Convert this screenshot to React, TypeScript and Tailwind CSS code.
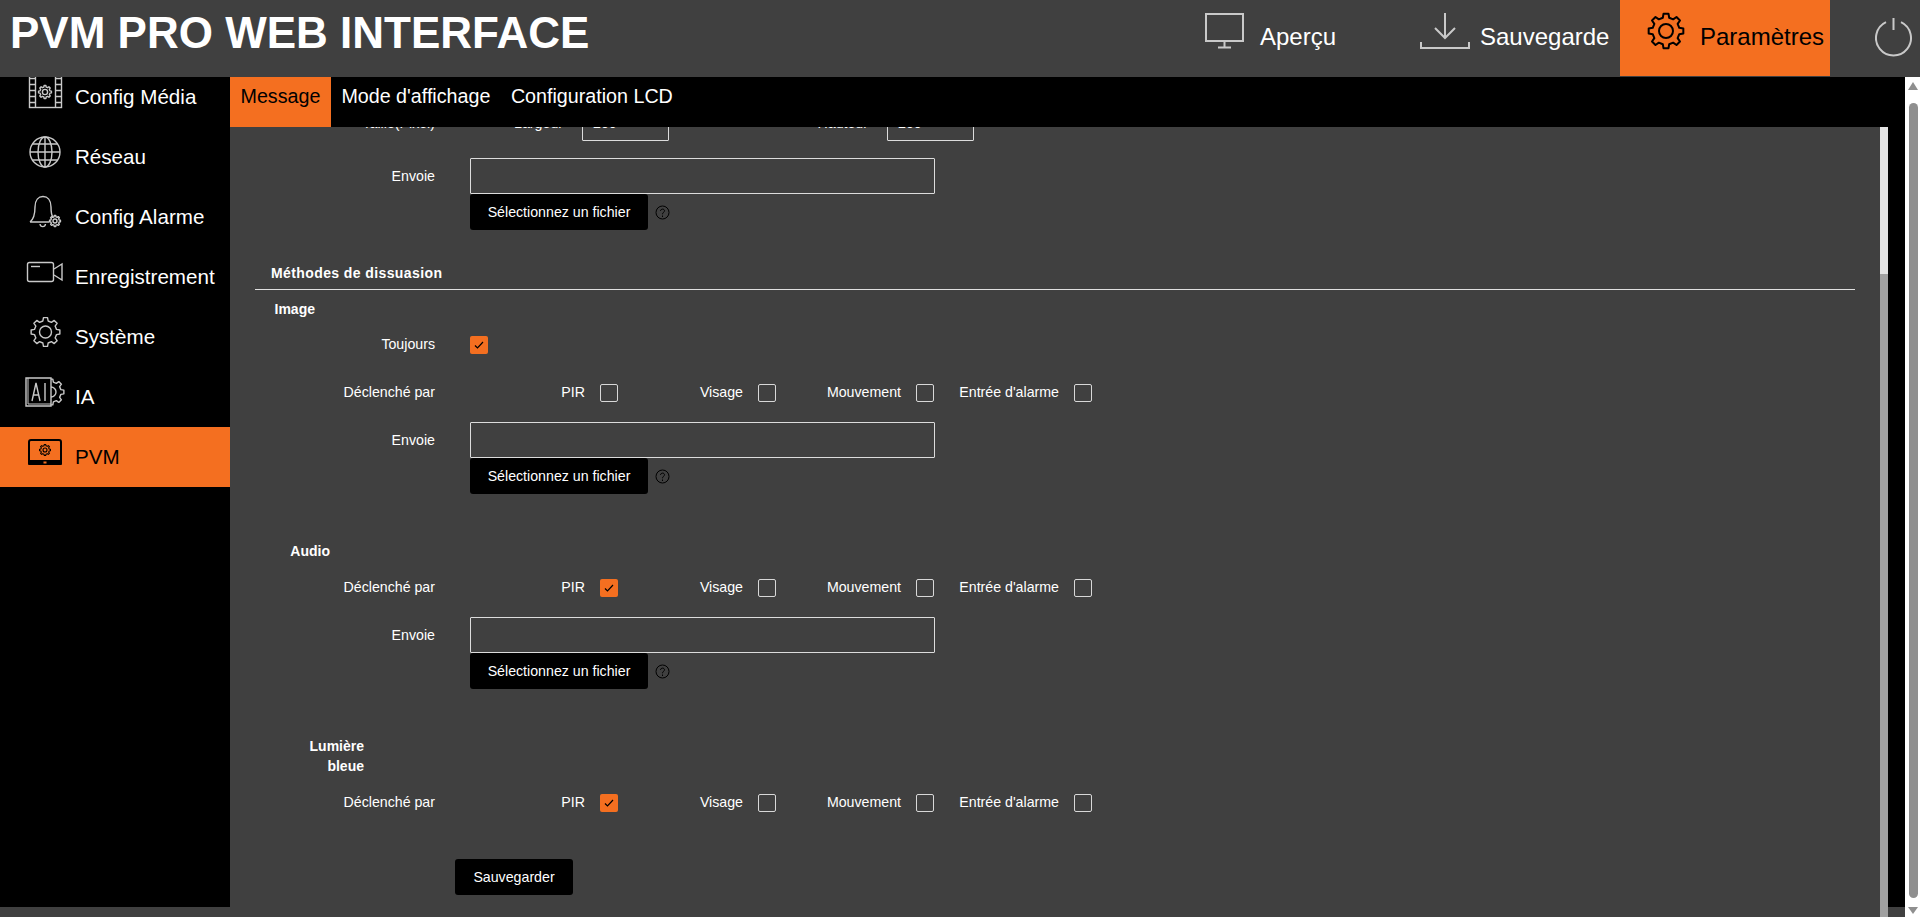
import type { ReactNode } from 'react';

const gearPath = (cx: number, cy: number, rOut: number, rIn: number, teeth = 8) => {
  const pts: string[] = [];
  const step = (Math.PI * 2) / teeth;
  for (let i = 0; i < teeth; i++) {
    const a = i * step - Math.PI / 2;
    const at = (r: number, t: number) =>
      `${(cx + r * Math.cos(a + t * step)).toFixed(2)} ${(cy + r * Math.sin(a + t * step)).toFixed(2)}`;
    pts.push(`${i === 0 ? 'M' : 'L'}${at(rIn, -0.3)}`);
    pts.push(`L${at(rOut, -0.18)}`);
    pts.push(`L${at(rOut, 0.18)}`);
    pts.push(`L${at(rIn, 0.3)}`);
  }
  return pts.join(' ') + ' Z';
};

function Gear({ cx, cy, r, hole }: { cx: number; cy: number; r: number; hole: number }) {
  return (
    <>
      <path d={gearPath(cx, cy, r, r * 0.78)} strokeLinejoin="round" />
      <circle cx={cx} cy={cy} r={hole} />
    </>
  );
}

function SideIcon({ children, stroke = '#c9c9c9' }: { children: ReactNode; stroke?: string }) {
  return (
    <svg width="40" height="40" viewBox="0 0 40 40" fill="none" stroke={stroke} strokeWidth="1.4" className="-mt-[10px] shrink-0">
      {children}
    </svg>
  );
}

const sideItems: { label: string; icon: ReactNode; active?: boolean }[] = [
  {
    label: 'Config Média',
    icon: (
      <>
        <rect x="4.5" y="0" width="32" height="35.5" />
        <path d="M10.5 0V36M30.5 0V36M4.5 6.5H10.5M4.5 12.5H10.5M4.5 18.5H10.5M4.5 24.5H10.5M4.5 30.5H10.5M30.5 6.5H36.5M30.5 12.5H36.5M30.5 18.5H36.5M30.5 24.5H36.5M30.5 30.5H36.5" />
        <Gear cx={20} cy={20} r={6.5} hole={2.6} />
      </>
    ),
  },
  {
    label: 'Réseau',
    icon: (
      <>
        <circle cx="20" cy="20" r="15" />
        <ellipse cx="20" cy="20" rx="7" ry="15" />
        <path d="M20 5V35M5 20H35M7.5 12H32.5M7.5 28H32.5" />
      </>
    ),
  },
  {
    label: 'Config Alarme',
    icon: (
      <>
        <path d="M5 30C9 27 10 23 10 15C10 8 13.5 4.5 18 4.5C22.5 4.5 26 8 26 15C26 20 27 24 28 25.5M5 30H24" />
        <path d="M15 32C15.5 35.5 20 35.5 20.5 32" />
        <Gear cx={30} cy={29} r={5.5} hole={2} />
      </>
    ),
  },
  {
    label: 'Enregistrement',
    icon: (
      <>
        <rect x="2.5" y="10.5" width="26" height="19" rx="2" />
        <path d="M29 17L37 12V28L29 23" />
        <path d="M6 14.5H15" />
      </>
    ),
  },
  {
    label: 'Système',
    icon: (
      <>
        <Gear cx={20.5} cy={20} r={14.5} hole={6} />
      </>
    ),
  },
  {
    label: 'IA',
    icon: (
      <>
        <path d="M1 6H26V34H1Z" />
        <path d="M3 6V32H26" strokeWidth="1" />
        <g clipPath="url(#ia-gear)">
          <Gear cx={26} cy={20} r={13} hole={5} />
        </g>
        <path d="M7 29L11 11L15 29M8.3 23H13.7M20 11V29" />
        <defs>
          <clipPath id="ia-gear">
            <rect x="26" y="0" width="14" height="40" />
          </clipPath>
        </defs>
      </>
    ),
  },
  {
    label: 'PVM',
    active: true,
    icon: (
      <>
        <rect x="4" y="8" width="32" height="24" rx="2" fill="none" stroke="#000" strokeWidth="2" />
        <rect x="3" y="28" width="34" height="5" rx="1" fill="#000" stroke="none" />
        <rect x="18.5" y="29.5" width="3" height="2" fill="#f46f20" stroke="none" />
        <g stroke="#000" strokeWidth="1.1">
          <Gear cx={20} cy={18} r={5.5} hole={2} />
        </g>
      </>
    ),
  },
];

function Sidebar() {
  return (
    <div className="w-[230px] h-[830px] shrink-0 bg-black overflow-hidden">
      <div className="-mt-[10px]">
        {sideItems.map((item) => (
          <div
            key={item.label}
            className={`h-[60px] pl-[25px] flex items-center gap-[10px] text-[20.6px] ${
              item.active ? 'bg-[#f46f20] text-black' : 'text-white'
            }`}
          >
            <SideIcon>{item.icon}</SideIcon>
            <span>{item.label}</span>
          </div>
        ))}
      </div>
    </div>
  );
}

function Header() {
  return (
    <div className="h-[77px] shrink-0 flex items-start bg-[#404040]">
      <h1 className="flex-1 min-w-0 pl-[10px] pt-[8px] text-[44px] leading-[50px] font-bold text-white">PVM PRO WEB INTERFACE</h1>
      <div className="w-[215px] shrink-0 h-[76px] flex items-center text-[24px] text-white">
        <svg width="40" height="36" viewBox="0 0 40 36" fill="none" stroke="#c9c9c9" strokeWidth="2" className="-mt-[14px] ml-[15px]">
          <rect x="1" y="1" width="37" height="27" />
          <path d="M19.5 28V34M13 34.5H26" />
        </svg>
        <span className="ml-[15px] -mt-[2px]">Aperçu</span>
      </div>
      <div className="w-[215px] shrink-0 h-[76px] flex items-center text-[24px] text-white">
        <svg width="50" height="36" viewBox="0 0 50 36" fill="none" stroke="#c9c9c9" strokeWidth="2" className="-mt-[14px] ml-[15px]">
          <path d="M25 0V24M15 15L25 25L35 15M1 29V35H49V29" />
        </svg>
        <span className="ml-[10px] -mt-[2px]">Sauvegarde</span>
      </div>
      <div className="w-[210px] shrink-0 h-[76px] bg-[#f46f20] flex items-center text-[24px] text-black">
        <svg width="38" height="38" viewBox="0 0 38 38" fill="none" stroke="#000" strokeWidth="2" className="-mt-[14px] ml-[27px]">
          <Gear cx={19} cy={19} r={17.5} hole={7} />
        </svg>
        <span className="ml-[15px] -mt-[2px]">Paramètres</span>
      </div>
      <div className="w-[90px] shrink-0 h-[76px] flex items-center">
        <svg width="38" height="40" viewBox="0 0 38 40" fill="none" stroke="#c9c9c9" strokeWidth="2" className="-mt-[2px] ml-[45px]">
          <path d="M11 5.2A17.5 17.5 0 1 0 26 5.2M18.5 1V13" />
        </svg>
      </div>
    </div>
  );
}

function Tabs() {
  const tabs = ['Message', "Mode d'affichage", 'Configuration LCD'];
  return (
    <div className="h-[50px] shrink-0 bg-black flex text-[19.7px] text-white">
      {tabs.map((t, i) => (
        <div key={t} className={`h-full flex items-center pb-[10px] ${i === 0 ? 'bg-[#f46f20] text-black px-[10.5px]' : 'pl-[10.5px] pr-[10px]'}`}>
          {t}
        </div>
      ))}
    </div>
  );
}

function Check({ on }: { on?: boolean }) {
  if (on) {
    return (
      <span className="w-[18px] h-[18px] shrink-0 rounded-[2px] bg-[#f46f20] flex items-center justify-center">
        <svg width="10" height="10" viewBox="0 0 10 10" fill="none" stroke="#000" strokeWidth="1.2">
          <path d="M1 5.5L3.5 8L9 2" />
        </svg>
      </span>
    );
  }
  return <span className="w-[18px] h-[18px] shrink-0 rounded-[2px] border border-[#d8d8d8]" />;
}

function Label({ children, className = '' }: { children: ReactNode; className?: string }) {
  return <div className={`w-[205px] shrink-0 text-right ${className}`}>{children}</div>;
}

function Upload({ className = '' }: { className?: string }) {
  return (
    <div className={`flex ${className}`}>
      <Label>
        <div className="h-[36px] leading-[36px]">Envoie</div>
      </Label>
      <div className="ml-[35px]">
        <div className="w-[465px] h-[36px] border border-[#dcdcdc] rounded-[1px]" />
        <div className="flex items-center">
          <button className="w-[178px] h-[36px] bg-black text-white rounded-[3px] text-[14.2px]">Sélectionnez un fichier</button>
          <svg width="15" height="15" viewBox="0 0 15 15" fill="none" stroke="#000" strokeWidth="1" className="ml-[7px]">
            <circle cx="7.5" cy="7.5" r="6.5" />
            <path d="M5.5 6C5.5 3.5 9.5 3.5 9.5 5.8C9.5 7.3 7.5 7.3 7.5 9.3M7.5 10.5V12" />
          </svg>
        </div>
      </div>
    </div>
  );
}

function Trigger({ pir, className = '' }: { pir?: boolean; className?: string }) {
  const opts = ['PIR', 'Visage', 'Mouvement', "Entrée d'alarme"];
  return (
    <div className={`flex items-center h-[18px] ${className}`}>
      <Label className="-mt-[2px]">Déclenché par</Label>
      <div className="ml-[25px] flex">
        {opts.map((o, i) => (
          <div key={o} className="w-[158px] flex items-center justify-end gap-[15px]">
            <span className="-mt-[2px]">{o}</span>
            <Check on={pir && i === 0} />
          </div>
        ))}
      </div>
    </div>
  );
}

function Content() {
  return (
    <div className="flex-1 overflow-hidden text-[14.2px] leading-[20px] text-white">
      <div className="-mt-[22px]">
        <div className="flex">
          <Label>
            <div className="h-[36px] leading-[36px]">Taille(Pixel)</div>
          </Label>
          <div className="w-[128px] h-[36px] leading-[36px] text-right">Largeur</div>
          <div className="ml-[19px] w-[87px] h-[36px] leading-[34px] pl-[10px] border border-[#dcdcdc] rounded-[1px]">200</div>
          <div className="w-[199px] h-[36px] leading-[36px] text-right">Hauteur</div>
          <div className="ml-[19px] w-[87px] h-[36px] leading-[34px] pl-[10px] border border-[#dcdcdc] rounded-[1px]">200</div>
        </div>
        <Upload className="mt-[17px]" />

        <div className="mt-[33px] mx-[25px] h-[27px] pl-[16px] border-b border-[#e0e0e0] text-[14px] tracking-[0.4px] font-bold">Méthodes de dissuasion</div>

        <div className="mt-[9px] w-[85px] text-right text-[14px] font-bold">Image</div>
        <div className="mt-[17px] flex items-center h-[18px]">
          <Label className="-mt-[2px]">Toujours</Label>
          <div className="ml-[35px]">
            <Check on />
          </div>
        </div>
        <Trigger className="mt-[30px]" />
        <Upload className="mt-[20px]" />

        <div className="mt-[47px] w-[100px] text-right text-[14px] font-bold">Audio</div>
        <Trigger pir className="mt-[18px]" />
        <Upload className="mt-[20px]" />

        <div className="mt-[47px] w-[134px] text-right text-[14px] font-bold">
          Lumière
          <br />
          bleue
        </div>
        <Trigger pir className="mt-[18px]" />

        <button className="block mt-[47px] ml-[225px] w-[118px] h-[36px] bg-black text-white rounded-[3px] text-[14.2px]">Sauvegarder</button>
      </div>
    </div>
  );
}

function PageScrollbar() {
  return (
    <div className="w-[15px] shrink-0 bg-white flex flex-col items-center pl-[1px]">
      <svg width="10" height="8" viewBox="0 0 10 8" fill="#8f8f8f" className="mt-[5px]">
        <path d="M5 0L10 8H0Z" />
      </svg>
      <div className="w-[9px] h-[795px] mt-[13px] rounded-t-[5px] rounded-b-[5px] bg-[#8f8f8f]" />
      <svg width="10" height="7" viewBox="0 0 10 7" fill="#8f8f8f" className="mt-[9px]">
        <path d="M0 0H10L5 7Z" />
      </svg>
    </div>
  );
}

export default function App() {
  return (
    <div className="h-screen w-full overflow-hidden flex flex-col bg-[#404040] [font-family:'Liberation_Sans',Arial,sans-serif]">
      <Header />
      <div className="flex-1 flex min-h-0">
        <Sidebar />
        <div className="flex-1 min-w-0 flex flex-col">
          <Tabs />
          <div className="flex-1 flex min-h-0">
            <Content />
            <div className="w-[8px] shrink-0 flex flex-col">
              <div className="h-[147px] bg-[#e3e3e3]" />
              <div className="flex-1 bg-[#a0a0a0]" />
            </div>
            <div className="w-[17px] shrink-0 flex flex-col">
              <div className="flex-1 bg-black" />
              <div className="h-[10px]" />
            </div>
          </div>
        </div>
        <PageScrollbar />
      </div>
    </div>
  );
}
